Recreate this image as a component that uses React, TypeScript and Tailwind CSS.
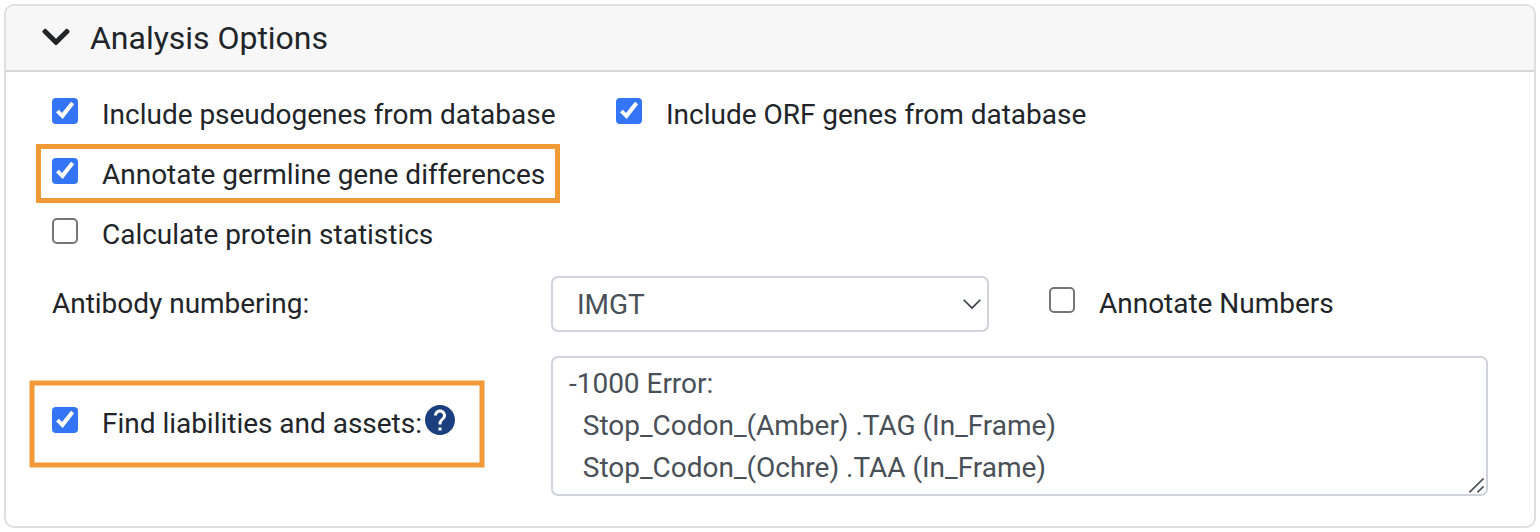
import type { ReactNode } from "react";
import { FaChevronDown } from "react-icons/fa";
import { MdHelp } from "react-icons/md";

function Checkbox({ checked = false }: { checked?: boolean }) {
  if (!checked) {
    return (
      <span className="mb-2 size-[26px] shrink-0 rounded-[5px] border-2 border-[#767676] bg-white" />
    );
  }
  return (
    <span className="mb-2 size-[26px] shrink-0 rounded-[4px] bg-[#3375f6]">
      <svg viewBox="0 0 78 78" className="size-full" fill="#fff">
        <path d="M12 42.5 20.5 35 30 45 57 11.5 66.5 18.5 32 63Z" />
      </svg>
    </span>
  );
}

function Option({ checked, children }: { checked?: boolean; children: ReactNode }) {
  return (
    <label className="flex items-center gap-6 whitespace-nowrap">
      <Checkbox checked={checked} />
      <span>{children}</span>
    </label>
  );
}

export default function App() {
  return (
    <div className="h-[532px] w-[1540px] bg-white p-1 font-['Roboto',sans-serif] text-[28px] leading-[42px] tracking-[-0.02px] text-[#212529]">
      <section className="h-[524px] w-[1532px] overflow-hidden rounded-[10px] border-2 border-[#dfdfdf]">
        <header className="flex h-[66px] items-center gap-5 border-b-2 border-[#d8d8d8] bg-[#f7f7f7] pl-9">
          <FaChevronDown className="mb-0.5 h-8 w-7" />
          <h2 className="text-[32px]">Analysis Options</h2>
        </header>

        <div className="flex flex-col pt-3 pl-[46px]">
          <div className="flex h-[60px] items-center pt-0.5">
            <div className="w-[564px]">
              <Option checked>Include pseudogenes from database</Option>
            </div>
            <Option checked>Include ORF genes from database</Option>
          </div>

          <div className="relative flex h-[60px] items-center pt-0.5">
            <Option checked>Annotate germline gene differences</Option>
            <div className="absolute top-0 -left-4 h-[59px] w-[524px] border-[5px] border-[#f09937]" />
          </div>

          <div className="flex h-[60px] items-center pt-0.5">
            <Option>Calculate protein statistics</Option>
          </div>

          <div className="mt-3 flex h-14 items-center">
            <span className="w-[499px]">Antibody numbering:</span>
            <div className="mr-[60px] flex h-14 w-[438px] items-center justify-between rounded-[7px] border-2 border-[#ced4da] pr-[5px] pl-6 text-[#495057]">
              <span className="pt-0.5">IMGT</span>
              <svg viewBox="0 0 20 12" className="h-3 w-5" fill="none" stroke="#343a40" strokeWidth="1.6">
                <path d="M1.7 1.7 10 10l8.3-8.3" />
              </svg>
            </div>
            <Option>Annotate Numbers</Option>
          </div>

          <div className="mt-6 flex h-[140px] items-start">
            <div className="relative flex w-[499px] items-center pt-[46px]">
              <Option checked>Find liabilities and assets:</Option>
              <MdHelp className="mb-2 size-9 text-[#1a3e7e]" />
              <div className="absolute top-6 left-[-23px] h-[87px] w-[455px] translate-x-[0.5px] translate-y-[0.5px] border-[5px] border-[#f09937]" />
            </div>
            <div className="relative h-[140px] w-[937px] rounded-[7px] border-2 border-[#ced4da] px-4 pt-[5px] whitespace-pre text-[#495057]">
              <p>-1000 Error:</p>
              <p>{"  Stop_Codon_(Amber) .TAG (In_Frame)"}</p>
              <p>{"  Stop_Codon_(Ochre) .TAA (In_Frame)"}</p>
              <svg
                viewBox="0 0 16 16"
                className="absolute right-px bottom-0 size-4"
                fill="none"
                stroke="#55575a"
                strokeWidth="1.8"
              >
                <path d="M.4 14.4 14.6.4M8.4 14.4 14.6 8.3" />
              </svg>
            </div>
          </div>
        </div>
      </section>
    </div>
  );
}
